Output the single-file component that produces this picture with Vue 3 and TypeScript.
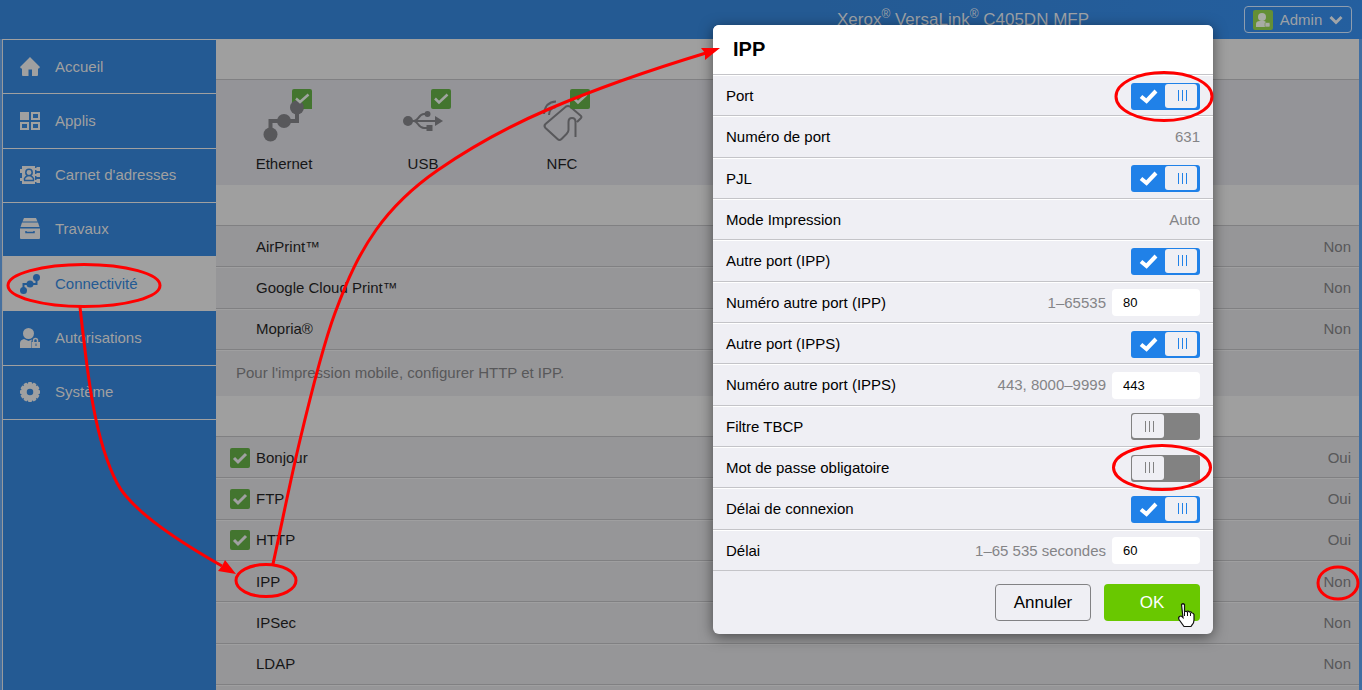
<script setup lang="ts">
import { reactive } from 'vue'

interface NavItem { id: string; label: string; active?: boolean }
interface ServiceRow { name: string; value: string; checked?: boolean }
interface Setting {
  id: string
  label: string
  kind: 'toggle' | 'value' | 'input'
  on?: boolean
  value?: string
  hint?: string
}

const nav: NavItem[] = [
  { id: 'home', label: 'Accueil' },
  { id: 'apps', label: 'Applis' },
  { id: 'contacts', label: "Carnet d'adresses" },
  { id: 'jobs', label: 'Travaux' },
  { id: 'connectivity', label: 'Connectivité', active: true },
  { id: 'permissions', label: 'Autorisations' },
  { id: 'system', label: 'Système' },
]

const mobile: ServiceRow[] = [
  { name: 'AirPrint™', value: 'Non' },
  { name: 'Google Cloud Print™', value: 'Non' },
  { name: 'Mopria®', value: 'Non' },
]

const protocols: ServiceRow[] = [
  { name: 'Bonjour', value: 'Oui', checked: true },
  { name: 'FTP', value: 'Oui', checked: true },
  { name: 'HTTP', value: 'Oui', checked: true },
  { name: 'IPP', value: 'Non' },
  { name: 'IPSec', value: 'Non' },
  { name: 'LDAP', value: 'Non' },
]

const settings = reactive<Setting[]>([
  { id: 'port', label: 'Port', kind: 'toggle', on: true },
  { id: 'port-number', label: 'Numéro de port', kind: 'value', value: '631' },
  { id: 'pjl', label: 'PJL', kind: 'toggle', on: true },
  { id: 'print-mode', label: 'Mode Impression', kind: 'value', value: 'Auto' },
  { id: 'alt-ipp', label: 'Autre port (IPP)', kind: 'toggle', on: true },
  { id: 'alt-ipp-number', label: 'Numéro autre port (IPP)', kind: 'input', value: '80', hint: '1–65535' },
  { id: 'alt-ipps', label: 'Autre port (IPPS)', kind: 'toggle', on: true },
  { id: 'alt-ipps-number', label: 'Numéro autre port (IPPS)', kind: 'input', value: '443', hint: '443, 8000–9999' },
  { id: 'tbcp', label: 'Filtre TBCP', kind: 'toggle', on: false },
  { id: 'password', label: 'Mot de passe obligatoire', kind: 'toggle', on: false },
  { id: 'timeout', label: 'Délai de connexion', kind: 'toggle', on: true },
  { id: 'delay', label: 'Délai', kind: 'input', value: '60', hint: '1–65 535 secondes' },
])

const teeth = Array.from({ length: 12 }, (_, i) => i * 30)
</script>

<template>
  <div class="page">
    <header class="topbar">
      <h1 class="product">Xerox<sup>®</sup> VersaLink<sup>®</sup> C405DN MFP</h1>
      <button class="account" type="button">
        <svg width="20" height="20" viewBox="0 0 20 20" aria-hidden="true">
          <rect width="20" height="20" rx="2" fill="#648f35" />
          <circle cx="9" cy="7" r="4" fill="#a8aca4" />
          <path d="M3 17v-3q0-3 4-3h4q2 0 2 2v4z" fill="#a8aca4" />
          <rect x="12" y="12.500" width="5" height="4.500" rx="1" fill="#a8aca4" stroke="#648f35" stroke-width=".6" />
        </svg>
        <span>Admin</span>
        <svg width="14" height="10" viewBox="0 0 14 10" aria-hidden="true">
          <path d="M1.500 2 7 7.500 12.500 2" fill="none" stroke="#a0a4a8" stroke-width="3" />
        </svg>
      </button>
    </header>

    <div class="body">
      <nav class="sidebar">
        <div class="nav-list">
          <a v-for="item in nav" :key="item.id" href="#" class="nav-item" :class="{ active: item.active }">
            <svg class="nav-icon" viewBox="0 0 22 22" aria-hidden="true">
              <path v-if="item.id === 'home'" fill="currentColor" d="M11 1 21 11l-1 1.500h-1V19q0 1-1 1h-5v-6.500H9.500V20H4q-1 0-1-1v-6.500H2L1 11z" />
              <g v-else-if="item.id === 'apps'" fill="none" stroke="currentColor" stroke-width="2">
                <rect x="2" y="3" width="7" height="6" fill="currentColor" />
                <rect x="13" y="3" width="7" height="6" />
                <rect x="2" y="13" width="7" height="6" />
                <rect x="13" y="13" width="7" height="6" />
              </g>
              <template v-else-if="item.id === 'contacts'">
                <path fill="currentColor" d="M3 2h13v18H3v-3H1v-3h2V9H1V5h2zM17.500 3H21v4h-3.500zM17.500 9H21v4h-3.500zM17.500 15H21v4h-3.500zM15 4h4v2h-4zM15 10h4v2h-4zM15 16h4v2h-4z" />
                <circle cx="10" cy="8.500" r="3.200" fill="none" stroke="#245a93" stroke-width="1.500" />
                <path d="M5.500 16.500v-2q1-2 3-2.500M14.500 16.500v-2q-1-2-3-2.500M5 16.500h10" fill="none" stroke="#245a93" stroke-width="1.500" />
              </template>
              <template v-else-if="item.id === 'jobs'">
                <path fill="currentColor" d="M5 0h12l1.500 3.500h-15zM3 4.500h16l1.500 4.500h-19zM1 10.500h20V20q0 1-1 1H2q-1 0-1-1z" />
                <path d="M7 13v1.500h8V13" fill="none" stroke="#245a93" stroke-width="1.500" />
              </template>
              <template v-else-if="item.id === 'connectivity'">
                <path d="M4.500 17v-6h13V5" fill="none" stroke="currentColor" stroke-width="2" />
                <circle cx="4.500" cy="17.500" r="3.500" fill="currentColor" />
                <circle cx="11" cy="11" r="3.500" fill="currentColor" />
                <circle cx="17.500" cy="4.500" r="3.500" fill="currentColor" />
              </template>
              <template v-else-if="item.id === 'permissions'">
                <circle cx="9.500" cy="6.500" r="5.500" fill="currentColor" />
                <path fill="currentColor" d="M1 21v-5q0-3 4-4l4.500 2 3.500-1.500-1 3V21z" />
                <path d="M14.500 15v-1.500a2 2 0 0 1 4 0V15" fill="none" stroke="currentColor" stroke-width="1.500" />
                <path fill-rule="evenodd" fill="currentColor" d="M12.500 15H21v6h-8.500zM16.500 16.500v2.500h1v-2.500z" />
              </template>
              <g v-else fill="currentColor">
                <rect v-for="angle in teeth" :key="angle" x="9" y="1" width="4" height="4" rx="1" :transform="`rotate(${angle} 11 11)`" />
                <circle cx="11" cy="11" r="6" fill="none" stroke="currentColor" stroke-width="5.500" />
              </g>
            </svg>
            <span>{{ item.label }}</span>
          </a>
        </div>
      </nav>

      <main class="content">
        <div class="band"></div>
        <div class="tiles">
          <button class="tile" type="button">
            <svg width="60" height="60" viewBox="0 0 60 60" aria-hidden="true">
              <rect x="38" y="2" width="20" height="20" rx="2" fill="#43752f" />
              <g fill="#58585b">
                <circle cx="16.500" cy="47.500" r="7" />
                <circle cx="30" cy="34" r="7" />
                <circle cx="43" cy="20.500" r="7" />
              </g>
              <path d="M46 13.500a7 7 0 0 1 3.500 8.500H58V13.500z" fill="#43752f" />
              <path d="M16.500 47V34H43V22" fill="none" stroke="#58585b" stroke-width="4" />
              <path d="M42 11.500 46 15 54.500 7.500" fill="none" stroke="#a0a5a0" stroke-width="2.500" />
            </svg>
            <span>Ethernet</span>
          </button>
          <button class="tile" type="button">
            <svg width="60" height="60" viewBox="0 0 60 60" aria-hidden="true">
              <circle cx="15" cy="34" r="5" fill="#58585b" />
              <path d="M15 34H43M21 34C25 34 26 27 31 27H35M21 34C25 34 25 41 31 41H35" fill="none" stroke="#58585b" stroke-width="2" />
              <path d="M42 29 50 34 42 39z" fill="#58585b" />
              <circle cx="34.500" cy="27" r="3" fill="#58585b" />
              <rect x="33.500" y="38" width="6" height="6" fill="#58585b" />
              <rect x="38" y="2" width="20" height="20" rx="2" fill="#43752f" />
              <path d="M42 11.500 46 15.500 54.500 7.500" fill="none" stroke="#a0a5a0" stroke-width="2.500" />
            </svg>
            <span>USB</span>
          </button>
          <button class="tile" type="button">
            <svg width="60" height="60" viewBox="0 0 60 60" aria-hidden="true">
              <g fill="none" stroke="#58585b" stroke-width="2">
                <path d="M43.500 50V35q0-4-3.500-4t-3.500 4v8q0 2-2 4l-5 5q-2 2-4 0L13.500 41q-2-2 0-4L34 19.500q2-1 4 0L49 29q1 1 0 2l-4 4" />
                <path d="M12 27q1-12 12-12.500M17 28q0-7 7-8" />
              </g>
              <rect x="38" y="2" width="20" height="20" rx="2" fill="#43752f" />
              <path d="M42 11.500 46 15.500 54.500 7.500" fill="none" stroke="#a0a5a0" stroke-width="2.500" />
            </svg>
            <span>NFC</span>
          </button>
        </div>

        <div class="band"></div>
        <div class="rows mobile">
          <button v-for="row in mobile" :key="row.name" class="row" type="button">
            <span class="mark"></span>
            <span class="name">{{ row.name }}</span>
            <span class="state">{{ row.value }}</span>
          </button>
        </div>
        <p class="note">Pour l'impression mobile, configurer HTTP et IPP.</p>

        <div class="band"></div>
        <div class="rows protocols">
          <button v-for="row in protocols" :key="row.name" class="row" type="button">
            <span class="mark">
              <svg v-if="row.checked" width="20" height="20" viewBox="0 0 20 20" aria-hidden="true">
                <rect width="20" height="20" rx="2" fill="#43752f" />
                <path d="M4 10 8 14 16 6" fill="none" stroke="#a0a0a2" stroke-width="3" />
              </svg>
            </span>
            <span class="name">{{ row.name }}</span>
            <span class="state">{{ row.value }}</span>
          </button>
        </div>
      </main>
    </div>

    <div class="backdrop">
      <section class="dialog" role="dialog" aria-labelledby="dialog-title">
        <h2 id="dialog-title">IPP</h2>
        <div class="settings">
          <div v-for="s in settings" :key="s.id" class="setting">
            <label v-if="s.kind !== 'value'" :for="s.id">{{ s.label }}</label>
            <span v-else>{{ s.label }}</span>
            <span v-if="s.kind === 'toggle'" class="toggle" :class="{ on: s.on }">
              <input :id="s.id" v-model="s.on" type="checkbox" />
              <svg v-if="s.on" class="tick" width="34" height="27" viewBox="0 0 34 27" aria-hidden="true">
                <path d="M10 13.500 15.500 18 25 8" fill="none" stroke="#fff" stroke-width="4" />
              </svg>
              <span class="knob"><i></i><i></i><i></i></span>
            </span>
            <span v-else-if="s.kind === 'value'" class="muted">{{ s.value }}</span>
            <span v-else class="field">
              <span class="muted">{{ s.hint }}</span>
              <input :id="s.id" v-model="s.value" type="text" />
            </span>
          </div>
        </div>
        <footer>
          <button type="button" class="cancel">Annuler</button>
          <button type="button" class="ok">OK</button>
        </footer>
      </section>
    </div>

    <svg class="callouts" width="1362" height="690" viewBox="0 0 1362 690" aria-hidden="true">
      <g fill="none" stroke="#f00" stroke-width="3">
        <ellipse cx="84" cy="285.500" rx="76" ry="21" />
        <ellipse cx="266" cy="580.500" rx="30" ry="16" />
        <ellipse cx="1338" cy="583" rx="20" ry="16" />
        <ellipse cx="1164" cy="96.500" rx="48" ry="24" />
        <ellipse cx="1162" cy="467.500" rx="48.500" ry="22" />
        <path d="M80 307C88 380 95 440 117 483C132 512 185 545 222 566" />
        <path d="M273 564C282 523 290 482 300 440C310 398 322 348 335 313C348 278 359 254 376 230C393 206 412 188 438 170C467 150 505 128 549 109C593 90 650 70 706 53" />
      </g>
      <path d="M236 574 225 560 222 566 218 571z" fill="#f00" />
      <path d="M720 48 701 48 705 53 705 60z" fill="#f00" />
      <path d="M1181.500 604.500q1.500-1.500 3 0V611l2 .5q1.500-1 3 .5 1.500-.5 2.500 1 1.500 0 2 1.500V620q0 3-2 5l-1 1.500h-7l-5-7q-1-2 .5-3t2.500 0l1 1z" fill="#fff" stroke="#111" stroke-width="1.200" />
      <path d="M1184.500 611v5M1187.500 612v4M1190.500 613v3" stroke="#111" />
    </svg>
  </div>
</template>

<style>
body {
  background: #969698;
}
</style>

<style scoped>
.page {
  position: relative;
  display: flex;
  flex-direction: column;
  height: 100vh;
  overflow: hidden;
  font-family: "Liberation Sans", Arial, sans-serif;
  font-size: 15px;
  line-height: 20px;
  color: #161617;
}
.page * {
  box-sizing: border-box;
}
button,
input {
  font: inherit;
  color: inherit;
  margin: 0;
}
button {
  padding: 0;
  border: 0;
  background: none;
}
.topbar {
  flex: none;
  display: grid;
  grid-template-columns: 1fr auto 1fr;
  align-items: center;
  height: 39px;
  padding: 0 10px 0 574px;
  background: linear-gradient(90deg, #245a93 60%, #245f9f);
  color: #9da1a6;
}
.product {
  grid-column: 2;
  margin: 0;
  font-size: 17px;
  line-height: 20px;
  font-weight: 400;
}
.product sup {
  font-size: 12px;
  line-height: 0;
}
.account {
  justify-self: end;
  display: flex;
  align-items: center;
  gap: 6px;
  height: 27px;
  width: 108px;
  padding: 0 8px;
  border: 1px solid #8e9daf;
  border-radius: 4px;
  white-space: nowrap;
}
.account span {
  flex: 1;
}
.body {
  flex: 1;
  display: flex;
  min-height: 0;
  border-left: 2px solid #46709f;
  border-right: 3px solid #406ea2;
}
.sidebar {
  flex: none;
  width: 214px;
  border-left: 1px solid #989a9d;
  border-top: 1px solid #a0a0a0;
  background: #245a93;
}
.nav-list {
  display: grid;
  grid-auto-rows: 1fr;
  min-height: 380px;
}
.nav-item {
  display: flex;
  align-items: center;
  gap: 14px;
  padding: 0 16px;
  border-bottom: 1px solid #a0a0a0;
  color: #a0a0a0;
  text-decoration: none;
}
.nav-item.active {
  background: #a0a0a0;
  color: #245a93;
}
.nav-icon {
  flex: none;
  width: 22px;
  height: 22px;
}
.content {
  flex: 1;
  min-width: 0;
  background: #969698;
}
.band {
  height: 41px;
  background: #9f9f9f;
  border-bottom: 1px solid #808082;
}
.tiles {
  display: flex;
  gap: 3px;
  height: 105px;
  padding-top: 7px;
  background: #949498;
}
.tile {
  display: flex;
  flex-direction: column;
  align-items: center;
  gap: 7px;
  width: 136px;
}
.rows {
  display: grid;
  grid-auto-rows: 1fr;
}
.mobile {
  min-height: 124px;
}
.protocols {
  min-height: 248px;
}
.row {
  display: flex;
  align-items: center;
  width: 100%;
  padding: 1px 8px 0 14px;
  border-bottom: 1px solid #808082;
  box-shadow: 0 1px #9f9fa0;
  text-align: left;
}
.mark {
  display: flex;
  width: 20px;
  margin-right: 6px;
}
.name {
  flex: 1;
}
.state,
.note {
  color: #58585a;
}
.note {
  display: flex;
  align-items: center;
  height: 46px;
  margin: 0;
  padding: 0 20px;
}
.backdrop {
  position: absolute;
  inset: 0;
  display: flex;
  justify-content: center;
  align-items: flex-start;
  padding: 25px 0 0 564px;
}
.dialog {
  width: 500px;
  border-radius: 6px;
  background: #efeff4;
  color: #000;
  box-shadow: 0 3px 14px rgba(0, 0, 0, 0.5);
}
h2 {
  margin: 0;
  padding: 12px 20px;
  border-bottom: 1px solid #c4c4c8;
  border-radius: 6px 6px 0 0;
  background: #fff;
  font-size: 20px;
  line-height: 25px;
  font-weight: 700;
}
.settings {
  display: grid;
  grid-auto-rows: 1fr;
  min-height: 496px;
}
.setting {
  display: flex;
  align-items: center;
  justify-content: space-between;
  padding: 1px 13px 0;
  border-top: 1px solid #fff;
  border-bottom: 1px solid #c4c4c8;
}
.muted {
  color: #848487;
}
.field {
  display: flex;
  align-items: center;
  gap: 6px;
}
.field input {
  width: 88px;
  height: 27px;
  padding: 0 11px;
  border: 0;
  border-radius: 4px;
  background: #fff;
  font-size: 13px;
}
.toggle {
  position: relative;
  display: flex;
  width: 69px;
  height: 27px;
  padding: 1px;
  border-radius: 3px;
  background: #828282;
}
.toggle.on {
  justify-content: space-between;
  padding-left: 0;
  padding-right: 3px;
  background: #2081e8;
}
.toggle input {
  position: absolute;
  inset: 0;
  width: 100%;
  height: 100%;
  opacity: 0;
}
.tick {
  margin-top: -1px;
}
.knob {
  flex: none;
  display: flex;
  justify-content: center;
  align-items: center;
  gap: 3px;
  width: 32px;
  height: 24px;
  padding-left: 2px;
  border-radius: 3px;
  background: #efeff4;
}
.knob i {
  width: 1px;
  height: 11px;
  background: #828282;
}
.on .knob i {
  background: #2081e8;
}
footer {
  display: flex;
  justify-content: flex-end;
  gap: 13px;
  padding: 13px;
}
footer button {
  width: 96px;
  height: 37px;
  border-radius: 4px;
  font-size: 17px;
}
footer .cancel {
  border: 1px solid #828284;
}
footer .ok {
  background: #69c800;
  color: #fff;
}
.callouts {
  position: absolute;
  top: 0;
  left: 0;
  pointer-events: none;
}
</style>
